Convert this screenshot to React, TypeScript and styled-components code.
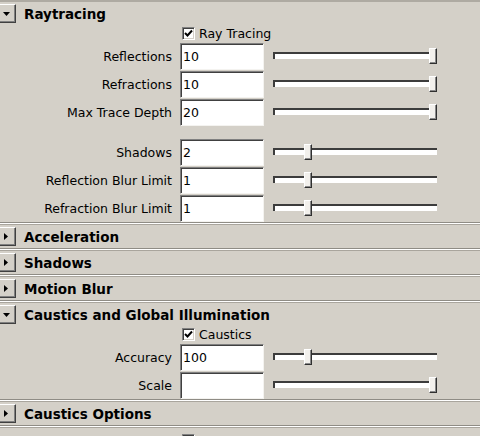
import React from 'react';
import styled, { createGlobalStyle } from 'styled-components';

const Global = createGlobalStyle`
  html, body { margin: 0; padding: 0; background: #d4d0c8; }
  body { width: 480px; height: 436px; overflow: hidden; font-family: "DejaVu Sans", Verdana, sans-serif; }
`;

const Panel = styled.div`
  width: 480px;
  height: 436px;
  overflow: hidden;
  background: #d4d0c8;
  border-top: 2px solid #aeaaa2;
  box-sizing: border-box;
  display: flex;
  flex-direction: column;
`;

const Divider = styled.div`
  flex: none;
  height: 3px;
  box-sizing: border-box;
  border-top: 1px solid #8f8c85;
  border-bottom: 1px solid #a9a59d;
  background: #ffffff;
`;

const HeaderRow = styled.div`
  flex: none;
  height: 23px;
  display: flex;
  align-items: center;
  gap: 8px;
`;

const ArrowButton = styled.div`
  flex: none;
  width: 16px;
  height: 19px;
  box-sizing: border-box;
  display: flex;
  align-items: center;
  justify-content: center;
  padding-right: 3px;
  background: #d4d0c8;
  border-top: 1px solid #ffffff;
  border-right: 1px solid #404040;
  border-bottom: 1px solid #404040;
  box-shadow: inset -1px -1px 0 #808080;
`;

const Title = styled.span`
  font: bold 13.5px "DejaVu Sans", Verdana, sans-serif;
  color: #000;
  white-space: nowrap;
`;

const Body = styled.div`
  flex: none;
  display: flex;
  flex-direction: column;
`;

const CheckRow = styled.div<{ $top?: number }>`
  flex: none;
  height: 17px;
  margin-top: ${(p) => p.$top ?? 0}px;
  display: flex;
  align-items: center;
  padding-left: 182px;
  gap: 4px;
`;

const Box = styled.div`
  flex: none;
  width: 13px;
  height: 13px;
  box-sizing: border-box;
  background: #fff;
  border-top: 1px solid #808080;
  border-left: 1px solid #808080;
  border-right: 1px solid #ffffff;
  border-bottom: 1px solid #ffffff;
  box-shadow: inset 1px 1px 0 #404040, inset -1px -1px 0 #d4d0c8;
  display: flex;
  align-items: center;
  justify-content: center;
`;

const CheckLabel = styled.span`
  font-size: 12.5px;
  color: #000;
  white-space: nowrap;
`;

const FieldRow = styled.div`
  flex: none;
  height: 28px;
  display: flex;
  align-items: center;
`;

const Label = styled.span`
  flex: none;
  width: 172px;
  margin-right: 8px;
  text-align: right;
  font-size: 12.5px;
  color: #000;
  white-space: nowrap;
`;

const Field = styled.div`
  flex: none;
  width: 84px;
  height: 27px;
  box-sizing: border-box;
  padding-left: 2px;
  display: flex;
  align-items: center;
  background: #fff;
  border-top: 1px solid #808080;
  border-left: 1px solid #808080;
  border-right: 1px solid #f4f3f0;
  border-bottom: 1px solid #f4f3f0;
  box-shadow: inset 1px 1px 0 #404040;
  font-size: 12.5px;
  color: #000;
`;

const Slider = styled.div`
  flex: none;
  position: relative;
  width: 164px;
  height: 28px;
  margin-left: 9px;
`;

const Groove = styled.div`
  margin-top: 10px;
  height: 7px;
  box-sizing: border-box;
  background: #fff;
  border-top: 2px solid #3c3c3c;
  border-left: 2px solid #3c3c3c;
`;

const Thumb = styled.div`
  position: absolute;
  top: 6px;
  width: 8px;
  height: 16px;
  box-sizing: border-box;
  background: #f2f0ec;
  border-top: 1px solid #ffffff;
  border-left: 1px solid #ffffff;
  border-right: 1px solid #303030;
  border-bottom: 1px solid #303030;
  box-shadow: inset -1px -1px 0 #8a8a8a;
`;

const Gap = styled.div`
  flex: none;
  height: 12px;
`;

const DownArrow = () => (
  <svg width="7" height="4" viewBox="0 0 7 4">
    <polygon points="0,0 7,0 3.5,4" fill="#000" />
  </svg>
);

const RightArrow = () => (
  <svg width="4" height="7" viewBox="0 0 4 7">
    <polygon points="0,0 4,3.5 0,7" fill="#000" />
  </svg>
);

const CheckMark = () => (
  <svg width="9" height="9" viewBox="0 0 9 9">
    <polyline points="1,4 3.5,6.5 8,1.5" fill="none" stroke="#000" strokeWidth="2" />
  </svg>
);

const Header: React.FC<{ title: string; open?: boolean }> = ({ title, open }) => (
  <HeaderRow>
    <ArrowButton>{open ? <DownArrow /> : <RightArrow />}</ArrowButton>
    <Title>{title}</Title>
  </HeaderRow>
);

const Check: React.FC<{ label?: string; checked?: boolean; top?: number }> = ({ label, checked, top }) => (
  <CheckRow $top={top}>
    <Box>{checked && <CheckMark />}</Box>
    {label && <CheckLabel>{label}</CheckLabel>}
  </CheckRow>
);

const Row: React.FC<{ label: string; value: string; pos: number }> = ({ label, value, pos }) => (
  <FieldRow>
    <Label>{label}</Label>
    <Field>{value}</Field>
    <Slider>
      <Groove />
      <Thumb style={{ left: `${Math.round(pos * 156)}px` }} />
    </Slider>
  </FieldRow>
);

export default function App() {
  return (
    <>
      <Global />
      <Panel>
        <Header title="Raytracing" open />
        <Body>
          <Check label="Ray Tracing" checked />
          <Row label="Reflections" value="10" pos={1} />
          <Row label="Refractions" value="10" pos={1} />
          <Row label="Max Trace Depth" value="20" pos={1} />
          <Gap />
          <Row label="Shadows" value="2" pos={0.2} />
          <Row label="Reflection Blur Limit" value="1" pos={0.2} />
          <Row label="Refraction Blur Limit" value="1" pos={0.2} />
        </Body>
        <Divider />
        <Header title="Acceleration" />
        <Divider />
        <Header title="Shadows" />
        <Divider />
        <Header title="Motion Blur" />
        <Divider />
        <Header title="Caustics and Global Illumination" open />
        <Body>
          <Check label="Caustics" checked />
          <Row label="Accuracy" value="100" pos={0.2} />
          <Row label="Scale" value="" pos={1} />
        </Body>
        <Divider />
        <Header title="Caustics Options" />
        <Divider />
        <Check top={4} />
      </Panel>
    </>
  );
}
